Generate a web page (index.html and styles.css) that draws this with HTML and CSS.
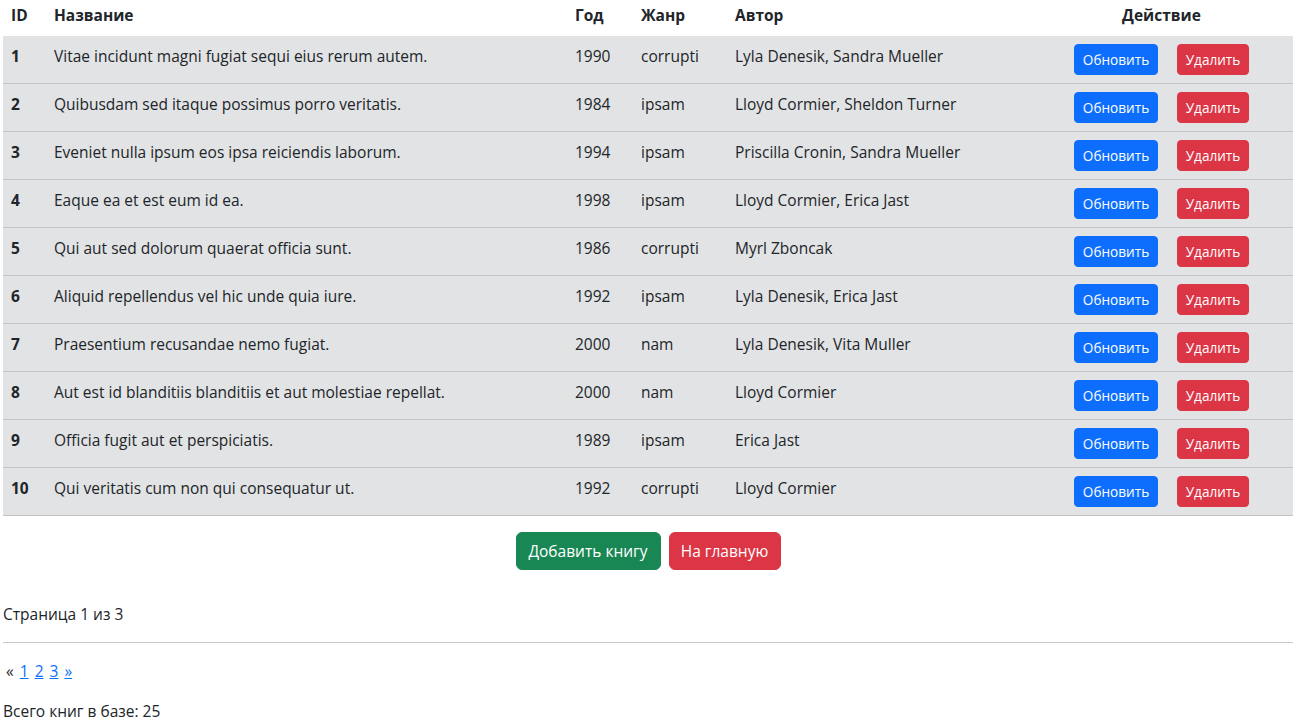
FILE: index.html
```html
<!DOCTYPE html>
<html lang="ru">
<head>
<meta charset="utf-8">
<title>Книги</title>
<link rel="stylesheet" href="styles.css">
</head>
<body>
<div class="page">
  <table class="books">
    <colgroup>
      <col class="c-id"><col class="c-title"><col class="c-year"><col class="c-genre"><col class="c-author"><col class="c-action">
    </colgroup>
    <thead>
      <tr><th>ID</th><th>Название</th><th>Год</th><th>Жанр</th><th>Автор</th><th class="th-action">Действие</th></tr>
    </thead>
    <tbody>
      <tr><th>1</th><td>Vitae incidunt magni fugiat sequi eius rerum autem.</td><td>1990</td><td>corrupti</td><td>Lyla Denesik, Sandra Mueller</td><td class="actions"><div class="btns"><a class="btn btn-sm btn-primary">Обновить</a><a class="btn btn-sm btn-danger">Удалить</a></div></td></tr>
      <tr><th>2</th><td>Quibusdam sed itaque possimus porro veritatis.</td><td>1984</td><td>ipsam</td><td>Lloyd Cormier, Sheldon Turner</td><td class="actions"><div class="btns"><a class="btn btn-sm btn-primary">Обновить</a><a class="btn btn-sm btn-danger">Удалить</a></div></td></tr>
      <tr><th>3</th><td>Eveniet nulla ipsum eos ipsa reiciendis laborum.</td><td>1994</td><td>ipsam</td><td>Priscilla Cronin, Sandra Mueller</td><td class="actions"><div class="btns"><a class="btn btn-sm btn-primary">Обновить</a><a class="btn btn-sm btn-danger">Удалить</a></div></td></tr>
      <tr><th>4</th><td>Eaque ea et est eum id ea.</td><td>1998</td><td>ipsam</td><td>Lloyd Cormier, Erica Jast</td><td class="actions"><div class="btns"><a class="btn btn-sm btn-primary">Обновить</a><a class="btn btn-sm btn-danger">Удалить</a></div></td></tr>
      <tr><th>5</th><td>Qui aut sed dolorum quaerat officia sunt.</td><td>1986</td><td>corrupti</td><td>Myrl Zboncak</td><td class="actions"><div class="btns"><a class="btn btn-sm btn-primary">Обновить</a><a class="btn btn-sm btn-danger">Удалить</a></div></td></tr>
      <tr><th>6</th><td>Aliquid repellendus vel hic unde quia iure.</td><td>1992</td><td>ipsam</td><td>Lyla Denesik, Erica Jast</td><td class="actions"><div class="btns"><a class="btn btn-sm btn-primary">Обновить</a><a class="btn btn-sm btn-danger">Удалить</a></div></td></tr>
      <tr><th>7</th><td>Praesentium recusandae nemo fugiat.</td><td>2000</td><td>nam</td><td>Lyla Denesik, Vita Muller</td><td class="actions"><div class="btns"><a class="btn btn-sm btn-primary">Обновить</a><a class="btn btn-sm btn-danger">Удалить</a></div></td></tr>
      <tr><th>8</th><td>Aut est id blanditiis blanditiis et aut molestiae repellat.</td><td>2000</td><td>nam</td><td>Lloyd Cormier</td><td class="actions"><div class="btns"><a class="btn btn-sm btn-primary">Обновить</a><a class="btn btn-sm btn-danger">Удалить</a></div></td></tr>
      <tr><th>9</th><td>Officia fugit aut et perspiciatis.</td><td>1989</td><td>ipsam</td><td>Erica Jast</td><td class="actions"><div class="btns"><a class="btn btn-sm btn-primary">Обновить</a><a class="btn btn-sm btn-danger">Удалить</a></div></td></tr>
      <tr><th>10</th><td>Qui veritatis cum non qui consequatur ut.</td><td>1992</td><td>corrupti</td><td>Lloyd Cormier</td><td class="actions"><div class="btns"><a class="btn btn-sm btn-primary">Обновить</a><a class="btn btn-sm btn-danger">Удалить</a></div></td></tr>
    </tbody>
  </table>

  <div class="main-actions">
    <a class="btn btn-success">Добавить книгу</a>
    <a class="btn btn-danger">На главную</a>
  </div>

  <p class="page-info">Страница 1 из 3</p>
  <hr class="sep">
  <p class="pager"><span class="prev">«</span> <a href="#">1</a> <a href="#">2</a> <a href="#">3</a> <a href="#">»</a></p>
  <p class="total">Всего книг в базе: 25</p>
</div>
</body>
</html>
```
FILE: styles.css
```css
* { box-sizing: border-box; }
body {
  margin: 0;
  font-family: "Open Sans", "Noto Sans", sans-serif;
  font-size: 15.5px;
  line-height: 24px;
  color: #212529;
  background: #fff;
}
.page { padding: 0 4px 0 3px; }

.books {
  width: 100%;
  border-collapse: collapse;
  table-layout: fixed;
  vertical-align: top;
}
.c-id { width: 43px; }
.c-title { width: 521px; }
.c-year { width: 66px; }
.c-genre { width: 94px; }
.c-author { width: 339px; }
.c-action { width: auto; }

.books thead th {
  text-align: left;
  font-weight: 700;
  padding: 3px 8px 9px;
  vertical-align: top;
}
.books thead th.th-action {
  text-align: center;
  padding-right: 44px;
}
.books tbody tr {
  background: #e2e3e5;
  border-bottom: 1px solid #c3c4c6;
}
.books tbody th,
.books tbody td {
  padding: 8px;
  vertical-align: top;
  text-align: left;
  white-space: nowrap;
}
.books tbody th { font-weight: 700; }
.books tbody td.actions { padding: 8px 44px 8px 8px; }
.btns { display: flex; gap: 19px; }

.btn {
  display: inline-block;
  border: 1px solid transparent;
  color: #fff;
  text-decoration: none;
  text-align: center;
  border-radius: 6px;
  padding: 6px 12px;
  font-size: 15.5px;
  line-height: 24px;
  cursor: pointer;
}
.btn-sm {
  padding: 4px 0;
  font-size: 13.6px;
  line-height: 21px;
  border-radius: 4px;
}
.btn-sm.btn-primary { width: 84px; }
.btn-sm.btn-danger { width: 72px; }
.btn-primary { background: #0d6efd; border-color: #0d6efd; }
.btn-danger { background: #dc3545; border-color: #dc3545; }
.btn-success { background: #198754; border-color: #198754; }

.main-actions {
  display: flex;
  justify-content: center;
  gap: 8px;
  margin: 16px 0 32px;
}
.main-actions .btn-success { width: 145px; padding: 6px 0; }
.main-actions .btn-danger { width: 112px; padding: 6px 0; }

.page-info { margin: 0 0 16px; }
.sep {
  margin: 0 0 16px;
  border: 0;
  border-top: 1px solid #c8c9ca;
  height: 0;
}
.pager { margin: 0 0 16px; padding-left: 3px; word-spacing: 2px; }
.pager a { color: #0d6efd; text-decoration: underline; }
.total { margin: 0; }
```
